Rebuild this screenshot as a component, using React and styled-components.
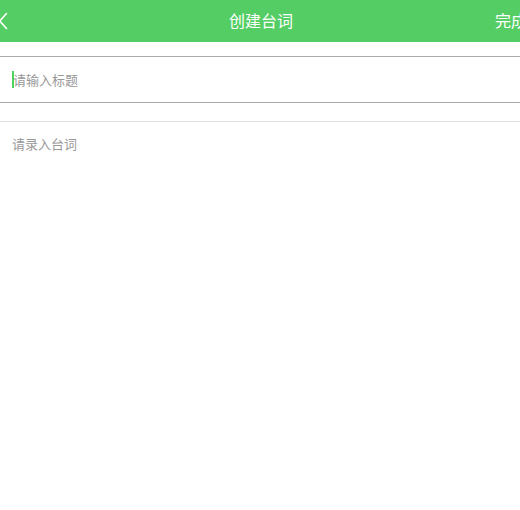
import React from "react";
import styled, { createGlobalStyle } from "styled-components";

const Global = createGlobalStyle`
  html, body { margin: 0; padding: 0; background: #fff; }
  body {
    font-family: "Noto Sans CJK SC", "Liberation Sans", sans-serif;
    overflow: hidden;
  }
  * { box-sizing: border-box; }
`;

const Page = styled.div`
  display: flex;
  flex-direction: column;
  width: 100%;
  height: 510px;
  background: #fff;
`;

const Header = styled.header`
  display: flex;
  align-items: center;
  height: 42px;
  background: #54ce64;
  color: #fff;
  flex-shrink: 0;
`;

const BackButton = styled.div`
  width: 28px;
  height: 100%;
  display: flex;
  align-items: center;
  margin-left: -1px;
`;

const Title = styled.div`
  flex: 1;
  text-align: center;
  font-size: 16px;
  line-height: 42px;
  margin-top: -3px;
  white-space: nowrap;
`;

const DoneButton = styled.div`
  width: 25px;
  font-size: 16px;
  line-height: 42px;
  margin-top: -3px;
  white-space: nowrap;
  overflow: visible;
`;

const Body = styled.div`
  display: flex;
  flex-direction: column;
  padding-top: 14px;
  flex: 1;
`;

const TitleField = styled.div`
  height: 47px;
  border-top: 1px solid #ababab;
  border-bottom: 1px solid #ababab;
  display: flex;
  align-items: center;
  padding-left: 12px;
`;

const Caret = styled.span`
  width: 2px;
  height: 17px;
  background: #4fd35c;
  margin-right: -1px;
`;

const Placeholder = styled.span`
  font-size: 13px;
  color: #999;
  line-height: 20px;
`;

const ContentField = styled.div`
  margin-top: 18px;
  border-top: 1px solid #e2e2e2;
  padding: 8px 12px;
  flex: 1;
`;

function Chevron() {
  return (
    <svg width="10" height="18" viewBox="0 0 10 18" fill="none">
      <polyline
        points="7.5,1.5 0.8,9 7.5,16.5"
        stroke="#fff"
        strokeWidth="1.6"
        strokeLinecap="round"
        strokeLinejoin="round"
      />
    </svg>
  );
}

export default function App() {
  return (
    <>
      <Global />
      <Page>
        <Header>
          <BackButton>
            <Chevron />
          </BackButton>
          <Title>创建台词</Title>
          <DoneButton>完成</DoneButton>
        </Header>
        <Body>
          <TitleField>
            <Caret />
            <Placeholder>请输入标题</Placeholder>
          </TitleField>
          <ContentField>
            <Placeholder>请录入台词</Placeholder>
          </ContentField>
        </Body>
      </Page>
    </>
  );
}
